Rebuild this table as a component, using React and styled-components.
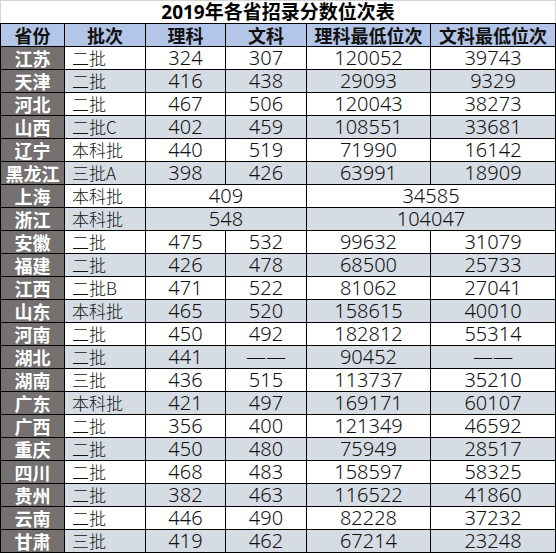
import React from 'react';
import styled, { createGlobalStyle } from 'styled-components';

const GlobalStyle = createGlobalStyle`
  html, body {
    margin: 0;
    padding: 0;
    background: #ffffff;
  }
  body {
    font-family: "Noto Sans", "Noto Sans CJK SC", sans-serif;
  }
`;

const COLS = [64, 81, 80, 81, 124, 125];

const ROWS = [
  ['江苏', '二批', '324', '307', '120052', '39743'],
  ['天津', '二批', '416', '438', '29093', '9329'],
  ['河北', '二批', '467', '506', '120043', '38273'],
  ['山西', '二批C', '402', '459', '108551', '33681'],
  ['辽宁', '本科批', '440', '519', '71990', '16142'],
  ['黑龙江', '三批A', '398', '426', '63991', '18909'],
  ['上海', '本科批', '409', null, '34585', null],
  ['浙江', '本科批', '548', null, '104047', null],
  ['安徽', '二批', '475', '532', '99632', '31079'],
  ['福建', '二批', '426', '478', '68500', '25733'],
  ['江西', '二批B', '471', '522', '81062', '27041'],
  ['山东', '本科批', '465', '520', '158615', '40010'],
  ['河南', '二批', '450', '492', '182812', '55314'],
  ['湖北', '二批', '441', '——', '90452', '——'],
  ['湖南', '三批', '436', '515', '113737', '35210'],
  ['广东', '本科批', '421', '497', '169171', '60107'],
  ['广西', '二批', '356', '400', '121349', '46592'],
  ['重庆', '二批', '450', '480', '75949', '28517'],
  ['四川', '二批', '468', '483', '158597', '58325'],
  ['贵州', '二批', '382', '463', '116522', '41860'],
  ['云南', '二批', '446', '490', '82228', '37232'],
  ['甘肃', '三批', '419', '462', '67214', '23248'],
];

const HEADERS = ['省份', '批次', '理科', '文科', '理科最低位次', '文科最低位次'];

const Table = styled.table`
  width: 556px;
  border-collapse: collapse;
  table-layout: fixed;
`;

const TitleCell = styled.td`
  height: 22px;
  padding: 0;
  border: 1px solid #d4d4d4;
  border-bottom: 1px solid #000;
  text-align: center;
  font-family: "Noto Sans", "Noto Sans CJK SC", sans-serif;
  font-weight: 700;
  font-size: 19px;
  line-height: 22px;
  color: #000;
`;

const HeadCell = styled.th`
  height: 22px;
  padding: 0;
  border: 1px solid #000;
  background: #b4c6e7;
  font-family: "Noto Sans CJK SC", sans-serif;
  font-weight: 700;
  font-size: 18px;
  line-height: 22px;
  color: #111;
  text-align: center;
  white-space: nowrap;
`;

const Row = styled.tr`
  background: ${(p) => (p.$shaded ? '#d6dce4' : '#ffffff')};
`;

const ProvinceCell = styled.td`
  height: 22px;
  padding: 0;
  border: 1px solid #000;
  background: #767171;
  color: #ffffff;
  font-family: "Noto Sans CJK SC", sans-serif;
  font-weight: 700;
  font-size: 18px;
  line-height: 22px;
  text-align: center;
  white-space: nowrap;
`;

const BatchCell = styled.td`
  height: 22px;
  padding: 0 0 0 7px;
  border: 1px solid #000;
  font-family: "Noto Sans CJK SC", sans-serif;
  font-weight: 300;
  font-size: 17px;
  line-height: 22px;
  color: #111;
  text-align: left;
  white-space: nowrap;
`;

const NumCell = styled.td`
  height: 22px;
  padding: 0;
  border: 1px solid #000;
  font-family: "Noto Sans", "Noto Sans CJK SC", sans-serif;
  font-weight: 300;
  font-size: 20px;
  line-height: 22px;
  color: #111;
  text-align: center;
  white-space: nowrap;
`;

function DataRow({ row, shaded }) {
  const [prov, batch, li, wen, liRank, wenRank] = row;
  const merged = wen === null;
  return (
    <Row $shaded={shaded}>
      <ProvinceCell>{prov}</ProvinceCell>
      <BatchCell>{batch}</BatchCell>
      {merged ? (
        <>
          <NumCell colSpan={2}>{li}</NumCell>
          <NumCell colSpan={2}>{liRank}</NumCell>
        </>
      ) : (
        <>
          <NumCell>{li}</NumCell>
          <NumCell>{wen}</NumCell>
          <NumCell>{liRank}</NumCell>
          <NumCell>{wenRank}</NumCell>
        </>
      )}
    </Row>
  );
}

export default function App() {
  return (
    <>
      <GlobalStyle />
      <Table>
        <colgroup>
          {COLS.map((w, i) => (
            <col key={i} style={{ width: w }} />
          ))}
        </colgroup>
        <tbody>
          <tr>
            <TitleCell colSpan={6}>2019年各省招录分数位次表</TitleCell>
          </tr>
          <tr>
            {HEADERS.map((h) => (
              <HeadCell key={h}>{h}</HeadCell>
            ))}
          </tr>
          {ROWS.map((row, i) => (
            <DataRow key={row[0]} row={row} shaded={i % 2 === 1} />
          ))}
        </tbody>
      </Table>
    </>
  );
}
